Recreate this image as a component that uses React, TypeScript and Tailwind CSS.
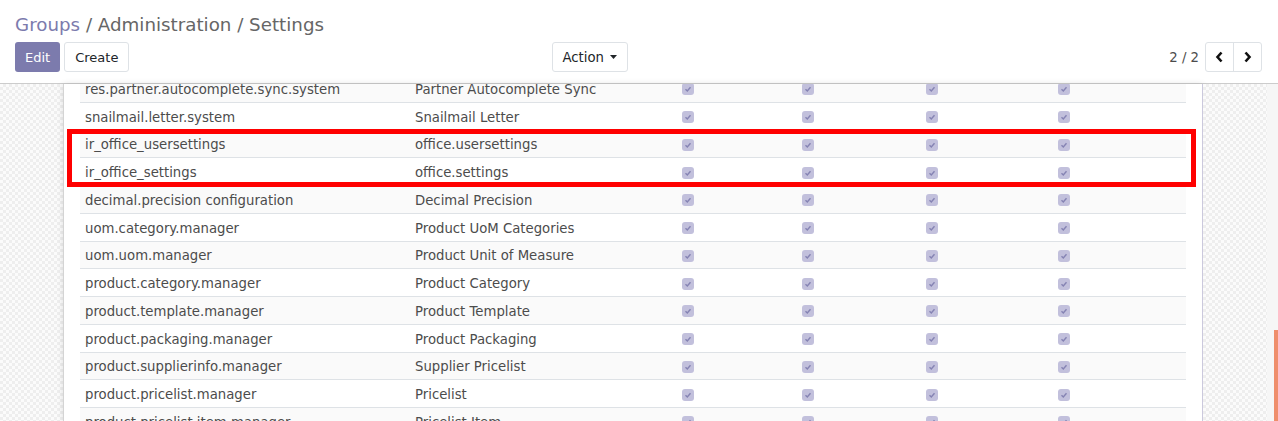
import React from "react";

const rows: [string, string][] = [
  ["res.partner.autocomplete.sync.system", "Partner Autocomplete Sync"],
  ["snailmail.letter.system", "Snailmail Letter"],
  ["ir_office_usersettings", "office.usersettings"],
  ["ir_office_settings", "office.settings"],
  ["decimal.precision configuration", "Decimal Precision"],
  ["uom.category.manager", "Product UoM Categories"],
  ["uom.uom.manager", "Product Unit of Measure"],
  ["product.category.manager", "Product Category"],
  ["product.template.manager", "Product Template"],
  ["product.packaging.manager", "Product Packaging"],
  ["product.supplierinfo.manager", "Supplier Pricelist"],
  ["product.pricelist.manager", "Pricelist"],
  ["product.pricelist.item.manager", "Pricelist Item"],
];

function Check() {
  return (
    <span className="flex h-[12px] w-[12px] items-center justify-center rounded-[3px] bg-[#c2c0dc]">
      <svg width="8" height="8" viewBox="0 0 8 8">
        <polyline points="1.5,4.2 3.3,6 6.5,2.2" fill="none" stroke="#8583b3" strokeWidth="1.4" />
      </svg>
    </span>
  );
}

const checker =
  "bg-[repeating-conic-gradient(#eeeeee_0_25%,#fbfbfb_0_50%)] bg-[length:6px_6px]";

export default function App() {
  return (
    <div className="h-[421px] w-[1278px] overflow-hidden bg-white font-['DejaVu_Sans',sans-serif] text-[13.25px] text-[#4c4c4c]">
      {/* Control panel */}
      <div className="h-[84px] border-b border-[#cccccc] px-[15px]">
        <div className="pt-[11px] text-[18.25px] leading-[27px]">
          <span className="text-[#7c7bad]">Groups</span>
          <span className="text-[#666666]"> / Administration / Settings</span>
        </div>
        <div className="mt-[4px] flex h-[30px] items-center">
          <div className="flex w-[613px] items-center justify-between">
            <div className="flex gap-[4px]">
              <button className="h-[30px] rounded-[3px] bg-[#7c7bad] px-[10px] pt-[2px] text-[13px] text-white">Edit</button>
              <button className="h-[30px] rounded-[3px] border border-[#dee2e6] bg-white px-[10px] pt-[2px] text-[13px] text-[#212529]">
                Create
              </button>
            </div>
            <button className="flex h-[30px] items-center gap-[6px] rounded-[3px] border border-[#dee2e6] bg-white px-[10px] pt-[2px] text-[#212529]">
              Action
              <svg width="7" height="4" viewBox="0 0 7 4" className="mb-[2px]">
                <polygon points="0,0 7,0 3.5,4" fill="#212529" />
              </svg>
            </button>
          </div>
          <div className="flex flex-1 items-center justify-end pr-[1px]">
            <span className="mr-[6px] pt-[2px] text-[#4c4c4c]">2 / 2</span>
            <div className="flex h-[30px] rounded-[3px] border border-[#dee2e6]">
              <button className="flex w-[28px] items-center justify-center border-r border-[#dee2e6]">
                <svg width="9" height="12" viewBox="0 0 9 12">
                  <polyline points="6.5,1.5 2.5,6 6.5,10.5" fill="none" stroke="#111" strokeWidth="2.6" />
                </svg>
              </button>
              <button className="flex w-[27px] items-center justify-center">
                <svg width="9" height="12" viewBox="0 0 9 12">
                  <polyline points="2.5,1.5 6.5,6 2.5,10.5" fill="none" stroke="#111" strokeWidth="2.6" />
                </svg>
              </button>
            </div>
          </div>
        </div>
      </div>

      {/* Content */}
      <div className="relative flex h-[337px]">
        <div className={`w-[63px] ${checker}`} />
        <div className="w-[1140px] overflow-hidden border-x border-l-[#d4d4d4] border-r-[#cbc9dd] bg-white px-[16px] shadow-[0_0_6px_rgba(0,0,0,0.12)]">
          <div className="mt-[-9px]">
            {rows.map(([a, b], i) => (
              <div
                key={a}
                className={`grid h-[27.75px] grid-cols-[330px_270px_120px_124px_132px_130px] items-center border-b border-[#dee2e6] ${
                  i % 2 === 0 ? "bg-[#fafafa]" : "bg-white"
                }`}
              >
                <div className="whitespace-nowrap pl-[5px] pt-[3px]">{a}</div>
                <div className="whitespace-nowrap pl-[5px] pt-[3px]">{b}</div>
                <div className="pl-[2px] pt-[2px]"><Check /></div>
                <div className="pl-[2px] pt-[2px]"><Check /></div>
                <div className="pl-[2px] pt-[2px]"><Check /></div>
                <div className="pl-[2px] pt-[2px]"><Check /></div>
              </div>
            ))}
          </div>
        </div>
        <div className={`w-[64px] ${checker}`} />
        <div className="flex w-[11px] flex-col justify-end bg-[#f6f6f6]">
          <div className="ml-auto h-[91px] w-[4px] bg-[#ef8e6c]" />
        </div>

        {/* highlight annotation */}
        <div className="pointer-events-none absolute left-[67px] top-[45px] h-[58px] w-[1129px] border-[5px] border-[#ff0000]" />
      </div>
    </div>
  );
}
